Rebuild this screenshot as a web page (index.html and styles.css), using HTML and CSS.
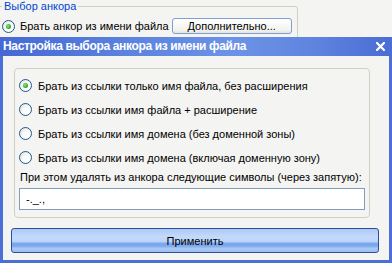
FILE: index.html
```html
<!DOCTYPE html>
<html lang="ru">
<head>
<meta charset="utf-8">
<link rel="stylesheet" href="styles.css">
</head>
<body>
<div class="page">
  <fieldset class="outer-group">
    <legend class="outer-legend">Выбор анкора</legend>
    <div class="outer-row">
      <span class="radio checked"></span>
      <span class="outer-label">Брать анкор из имени файла</span>
      <button class="btn-more">Дополнительно...</button>
    </div>
  </fieldset>

  <div class="dialog">
    <div class="titlebar">
      <span class="title">Настройка выбора анкора из имени файла</span>
      <svg class="close" width="9" height="9" viewBox="0 0 9 9"><path d="M1 1L8 8M8 1L1 8" stroke="#fff" stroke-width="2.2" stroke-linecap="square"/></svg>
    </div>
    <div class="body">
      <div class="group">
        <div class="opt"><span class="radio checked"></span><span>Брать из ссылки только имя файла, без расширения</span></div>
        <div class="opt"><span class="radio"></span><span>Брать из ссылки имя файла + расширение</span></div>
        <div class="opt"><span class="radio"></span><span>Брать из ссылки имя домена (без доменной зоны)</span></div>
        <div class="opt"><span class="radio"></span><span>Брать из ссылки имя домена (включая доменную зону)</span></div>
        <div class="hint">При этом удалять из анкора следующие символы (через запятую):</div>
        <div class="input">-._.,</div>
      </div>
      <button class="btn-apply">Применить</button>
    </div>
  </div>
</div>
</body>
</html>
```
FILE: styles.css
```css
html, body {
  margin: 0;
  padding: 0;
}
body {
  width: 392px;
  height: 263px;
  overflow: hidden;
  background: #f4f4f2;
  font-family: "Liberation Sans", Arial, sans-serif;
  font-size: 11px;
  color: #000;
}
.page {
  display: flex;
  flex-direction: column;
  height: 263px;
}
.outer-group {
  margin: 0 0 0 -6px;
  width: 304px;
  height: 40px;
  box-sizing: border-box;
  border: 1px solid #d0d0bf;
  border-radius: 3px;
  padding: 0 0 0 7px;
  flex: none;
}
.outer-legend {
  padding: 0 2px;
  color: #0046d5;
  font-size: 11px;
  line-height: 13px;
}
.outer-row {
  display: flex;
  align-items: center;
  height: 16px;
  margin-top: 5px;
  white-space: nowrap;
}
.outer-label {
  margin-left: 5px;
}
.btn-more {
  margin-left: 3px;
  width: 120px;
  height: 16px;
  box-sizing: border-box;
  border: 1px solid #7f9fd2;
  border-radius: 3px;
  background: linear-gradient(#ffffff, #f2f2ee 80%, #e4e3dc);
  font-family: inherit;
  font-size: 11px;
  line-height: 13px;
  padding: 0;
  color: #000;
  flex: none;
}
.radio {
  width: 13px;
  height: 13px;
  box-sizing: border-box;
  border: 1px solid #1f5a8f;
  border-radius: 50%;
  background: radial-gradient(circle at 65% 65%, #ffffff 30%, #dcdcd6 100%);
  display: flex;
  align-items: center;
  justify-content: center;
  flex: none;
}
.radio.checked::after {
  content: "";
  width: 5px;
  height: 5px;
  border-radius: 50%;
  background: radial-gradient(circle at 40% 40%, #8ee38a, #22a31e 70%);
}
.dialog {
  margin-top: -3px;
  flex: 1;
  display: flex;
  flex-direction: column;
  border: 3px solid #4b6fd7;
  border-top: none;
  background: #f4f4f2;
}
.titlebar {
  height: 19px;
  margin: 0 -3px;
  padding: 0 7px 0 3px;
  display: flex;
  align-items: center;
  justify-content: space-between;
  background: linear-gradient(to right, #4568d5 0%, #5d84df 35%, #6c93e6 60%, #5f84df 80%, #4a6cd5 100%);
  flex: none;
}
.title {
  color: #fff;
  font-weight: bold;
  font-size: 12px;
  line-height: 15px;
  letter-spacing: -0.35px;
}
.close {
  display: block;
}
.body {
  flex: 1;
  display: flex;
  flex-direction: column;
  padding: 12px 10px 6px 8px;
}
.group {
  margin: 0 9px 0 3px;
  border: 1px solid #d0d0bf;
  border-radius: 4px;
  padding: 10px 4px 7px 4px;
  display: flex;
  flex-direction: column;
}
.opt {
  display: flex;
  align-items: center;
  height: 13px;
  margin-bottom: 11px;
  gap: 6px;
}
.hint {
  margin-top: -4px;
  line-height: 13px;
  margin-left: 1px;
}
.input {
  margin-top: 4px;
  height: 22px;
  box-sizing: border-box;
  border: 1px solid #7f9db9;
  background: #fff;
  padding: 3px 6px 0;
  line-height: 14px;
}
.btn-apply {
  margin-top: 10px;
  height: 25px;
  border: 1px solid #304c9c;
  border-radius: 3px;
  background: linear-gradient(#aec9f4 0%, #c3dafb 35%, #b9d3f9 55%, #7fa9ec 62%, #7aa6ec 72%, #a8c8f6 85%, #9cbef1 100%);
  font-family: inherit;
  font-size: 11px;
  color: #000;
  padding: 0;
}
```
